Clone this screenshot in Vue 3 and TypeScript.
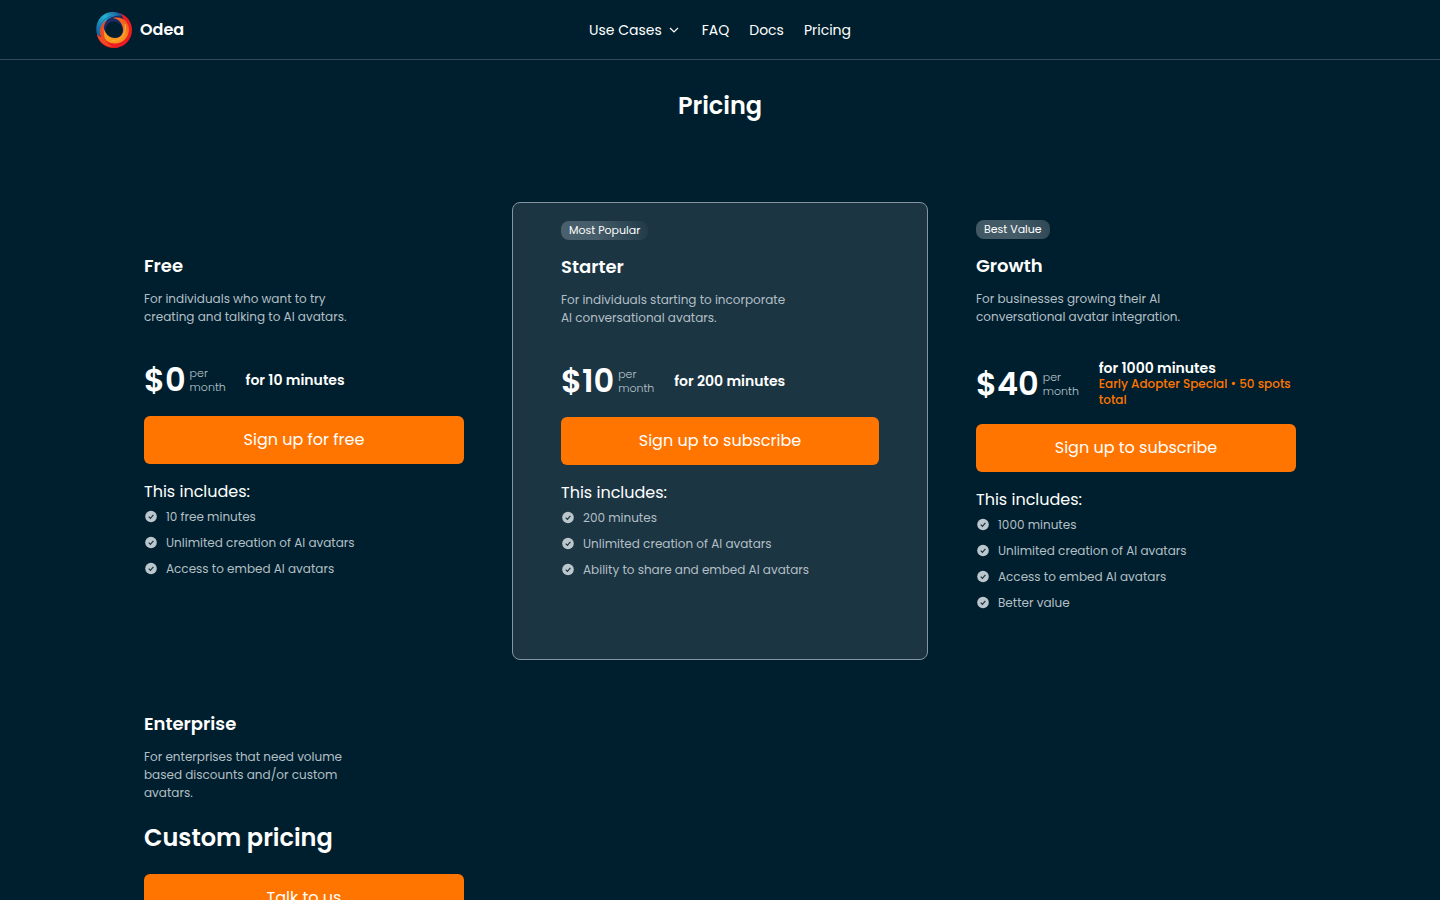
<script setup lang="ts">
interface Plan {
  name: string
  description: string
  badge?: string
  featured?: boolean
  price?: string
  minutes?: string
  special?: string
  action: string
  features: string[]
}

const plans: Plan[] = [
  {
    name: 'Free',
    description: 'For individuals who want to try\ncreating and talking to AI avatars.',
    price: '$0',
    minutes: 'for 10 minutes',
    action: 'Sign up for free',
    features: ['10 free minutes', 'Unlimited creation of AI avatars', 'Access to embed AI avatars'],
  },
  {
    name: 'Starter',
    description: 'For individuals starting to incorporate\nAI conversational avatars.',
    badge: 'Most Popular',
    featured: true,
    price: '$10',
    minutes: 'for 200 minutes',
    action: 'Sign up to subscribe',
    features: ['200 minutes', 'Unlimited creation of AI avatars', 'Ability to share and embed AI avatars'],
  },
  {
    name: 'Growth',
    description: 'For businesses growing their AI\nconversational avatar integration.',
    badge: 'Best Value',
    price: '$40',
    minutes: 'for 1000 minutes',
    special: 'Early Adopter Special • 50 spots total',
    action: 'Sign up to subscribe',
    features: ['1000 minutes', 'Unlimited creation of AI avatars', 'Access to embed AI avatars', 'Better value'],
  },
  {
    name: 'Enterprise',
    description: 'For enterprises that need volume\nbased discounts and/or custom\navatars.',
    action: 'Talk to us',
    features: [],
  },
]
</script>

<template>
  <div class="page">
    <header class="header">
      <a class="brand" href="#">
        <svg class="logo" viewBox="0 0 36 36" aria-hidden="true">
          <defs>
            <linearGradient id="cool" x1="0" y1="0.8" x2="1" y2="0">
              <stop offset="0" stop-color="#1667a0" />
              <stop offset="0.5" stop-color="#22b3d2" />
              <stop offset="1" stop-color="#1b3f86" />
            </linearGradient>
            <linearGradient id="orange" x1="0" y1="1" x2="1" y2="0">
              <stop offset="0" stop-color="#f9a01f" />
              <stop offset="0.6" stop-color="#f98a1f" />
              <stop offset="1" stop-color="#f0401e" />
            </linearGradient>
          </defs>
          <circle cx="18" cy="18" r="13" fill="none" stroke="#1c2a66" stroke-width="9" />
          <path fill="#ee1c20" fill-rule="evenodd" d="M23 1C31 3 36 10 36 18C36 28 28 36 18 36C9 36 2 30 1 22C5 27 10 29 18 29C26 28 30 23 29 15C29 9 27 4 23 1z" />
          <path fill="url(#orange)" d="M17 6C27 4 33 10 33 18C32 28 24 33 15 31C8 29 5 22 7 14C9 22 13 26 19 26C25 26 28 21 27 16C26 11 23 7 17 6z" />
          <path fill="url(#cool)" d="M1 22C-2 11 5 0 17 0C22 0 25 2 27 4C20 3 13 5 10 9C6 13 5 18 6 24C4 24 2 23 1 22z" />
          <path fill="#ef4a24" d="M1 22C2 29 9 35 17 35C11 32 8 28 8 21C7 16 8 12 11 8C7 10 4 15 4 20C4 22 5 24 5 25C3 24 2 23 1 22z" />
          <path fill="none" stroke="#1d6fae" stroke-width="1" d="M3 20C3 12 8 6 16 4" />
          <path fill="none" stroke="#ffb02e" stroke-width="1" d="M29 12C31 20 26 29 16 29" />
        </svg>
        <span>Odea</span>
      </a>
      <nav class="nav" aria-label="Main">
        <button class="nav-item" type="button">
          Use Cases
          <svg class="chevron" viewBox="0 0 16 16" aria-hidden="true"><path d="M4 6l4 4 4-4" /></svg>
        </button>
        <a class="nav-item" href="#faq">FAQ</a>
        <a class="nav-item" href="#docs">Docs</a>
        <a class="nav-item" href="#pricing">Pricing</a>
      </nav>
    </header>

    <main>
      <h1 class="title">Pricing</h1>
      <div class="plans">
        <section v-for="plan in plans" :key="plan.name" class="plan" :class="{ featured: plan.featured }">
          <div class="badge-row">
            <span v-if="plan.badge" class="badge">{{ plan.badge }}</span>
          </div>
          <h2 class="name">{{ plan.name }}</h2>
          <p class="description">{{ plan.description }}</p>
          <div v-if="plan.price" class="price-row">
            <span class="price">{{ plan.price }}</span>
            <span class="period">per month</span>
            <div class="allowance">
              <p class="minutes">{{ plan.minutes }}</p>
              <p v-if="plan.special" class="special">{{ plan.special }}</p>
            </div>
          </div>
          <div v-else class="price-row custom">Custom pricing</div>
          <button class="action" type="button">{{ plan.action }}</button>
          <template v-if="plan.features.length">
            <h3 class="includes">This includes:</h3>
            <ul class="features">
              <li v-for="feature in plan.features" :key="feature">
                <svg class="check" viewBox="0 0 14 14" aria-hidden="true">
                  <circle cx="7" cy="6.500" r="5.800" />
                  <path d="M4.700 6.700l1.700 1.700 3-3.600" />
                </svg>
                {{ feature }}
              </li>
            </ul>
          </template>
        </section>
      </div>
    </main>
  </div>
</template>

<style>
body {
  margin: 0;
  background: #001f2e;
}
</style>

<style scoped>
.page {
  min-height: 100vh;
  background: #001f2e;
  color: #fff;
  font-family: Poppins, Inter, sans-serif;
  font-size: 16px;
  font-weight: 400;
  line-height: 24px;
}

.page *,
.page {
  box-sizing: border-box;
}

h1,
h2,
h3,
p,
ul {
  margin: 0;
  padding: 0;
}

button {
  font: inherit;
  color: inherit;
  border: 0;
  padding: 0;
  cursor: pointer;
}

a {
  color: inherit;
  text-decoration: none;
}

.header {
  display: grid;
  grid-template-columns: 1fr auto 1fr;
  align-items: center;
  height: 60px;
  padding: 0 96px;
  border-bottom: 1px solid #334c58;
}

.brand {
  display: flex;
  align-items: center;
  gap: 8px;
  font-weight: 600;
}

.logo {
  width: 36px;
  height: 36px;
}

.nav {
  display: flex;
  align-items: center;
  gap: 20px;
}

.nav-item {
  display: flex;
  align-items: center;
  gap: 4px;
  background: none;
  font-size: 14px;
}

.chevron {
  width: 16px;
  height: 16px;
  fill: none;
  stroke: currentColor;
  stroke-width: 1.2;
}

.title {
  padding: 29px 0 79px;
  font-size: 24px;
  font-weight: 600;
  line-height: 34px;
  text-align: center;
}

.plans {
  display: grid;
  grid-template-columns: repeat(3, 1fr);
  padding: 0 96px;
}

.plan {
  padding: 18px 48px 48px;
}

.featured {
  border: 1px solid #8495a0;
  border-radius: 8px;
  background: #1b3543;
}

.badge-row {
  display: flex;
  height: 19px;
  margin-bottom: 13px;
}

.badge {
  padding: 0 8px;
  border-radius: 8px;
  background: linear-gradient(75deg, #405764, #465d69 50%, #2f4855);
  font-size: 11px;
  line-height: 19px;
}

.featured .badge {
  background: linear-gradient(75deg, #4a606c, #465c68 40%, #203a48);
}

.name {
  margin-bottom: 11px;
  font-size: 18px;
  font-weight: 600;
  line-height: 27px;
}

.description {
  min-height: 54px;
  margin-bottom: 16px;
  color: #b3bfc5;
  font-size: 12px;
  line-height: 18px;
  white-space: pre-line;
}

.price-row {
  display: flex;
  align-items: center;
  min-height: 40px;
  margin-bottom: 16px;
}

.price {
  margin-right: 4px;
  font-size: 32px;
  font-weight: 600;
  line-height: 40px;
}

.period {
  flex: none;
  width: 35px;
  margin-right: 21px;
  color: #b9c4ca;
  font-size: 11px;
  font-weight: 300;
  line-height: 14px;
}

.minutes {
  font-size: 14px;
  font-weight: 600;
  line-height: 16px;
}

.special {
  color: #ff7500;
  font-size: 12px;
  font-weight: 500;
  line-height: 16px;
}

.custom {
  font-size: 24px;
  font-weight: 600;
}

.action {
  display: block;
  width: 100%;
  height: 48px;
  margin-bottom: 16px;
  border-radius: 6px;
  background: #ff7500;
}

.includes {
  margin-bottom: 4px;
  font-size: 16px;
  font-weight: 400;
}

.features {
  display: grid;
  gap: 8px;
  color: #b3bfc5;
  font-size: 12px;
  line-height: 18px;
  list-style: none;
}

.features li {
  display: flex;
  align-items: center;
  gap: 8px;
}

.check {
  flex: none;
  width: 14px;
  height: 14px;
  fill: #bcc7cd;
}

.check path {
  fill: none;
  stroke: #1a3442;
  stroke-width: 1.2;
}
</style>
